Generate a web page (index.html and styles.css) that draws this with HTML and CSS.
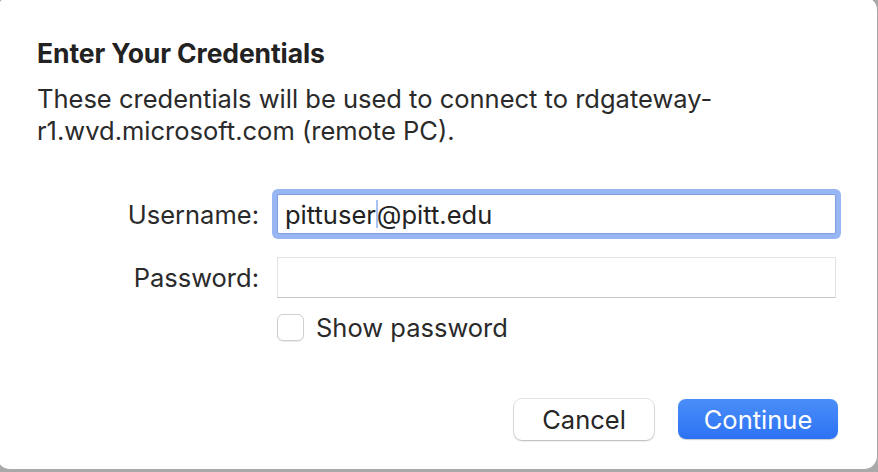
FILE: index.html
```html
<!DOCTYPE html>
<html>
<head>
<meta charset="utf-8">
<link rel="stylesheet" href="styles.css">
</head>
<body>
<div class="dialog">
  <h1 class="title">Enter Your Credentials</h1>
  <p class="desc">These credentials will be used to connect to rdgateway-<br>r1.wvd.microsoft.com (remote PC).</p>
  <div class="form">
    <label class="label">Username:</label>
    <div class="field focused"><span class="val">pittuser</span><span class="caret"></span><span class="val">@pitt.edu</span></div>
    <label class="label row-gap">Password:</label>
    <div class="field row-gap"></div>
    <div></div>
    <div class="check-row"><span class="checkbox"></span><span class="check-label">Show password</span></div>
  </div>
  <div class="buttons">
    <button class="btn cancel">Cancel</button>
    <button class="btn primary">Continue</button>
  </div>
</div>
</body>
</html>
```
FILE: styles.css
```css
html, body {
  margin: 0;
  padding: 0;
}
body {
  width: 878px;
  height: 472px;
  overflow: hidden;
  background: #a9a9a9;
  font-family: Inter, "Noto Sans", sans-serif;
  color: #262626;
}
.dialog {
  box-sizing: border-box;
  width: 880px;
  height: 472px;
  margin: -3px 0 0 -3px;
  background: #ffffff;
  border-radius: 13px;
  padding: 41px 0 0 40px;
  display: flex;
  flex-direction: column;
}
.title {
  margin: 0;
  font-size: 26.5px;
  font-weight: 700;
  line-height: 30px;
  letter-spacing: -0.1px;
  color: #222;
}
.desc {
  margin: 15px 0 0 0;
  font-size: 25.5px;
  line-height: 32px;
  color: #2a2a2a;
}
.form {
  margin-top: 47px;
  display: grid;
  grid-template-columns: 222px 559px;
  column-gap: 18px;
  row-gap: 0;
  align-items: center;
}
.label {
  justify-self: end;
  font-size: 25.5px;
  line-height: 31px;
  color: #2a2a2a;
}
.row-gap {
  margin-top: 23px;
}
.field {
  box-sizing: border-box;
  height: 41px;
  border: 1px solid #e2e2e2;
  border-bottom-color: #c6c6c6;
  background: #fff;
  display: flex;
  align-items: center;
  padding-left: 7px;
  font-size: 25.5px;
  color: #222;
}
.field.focused {
  height: 40px;
  border-color: #7f9fe0;
  box-shadow: 0 0 0 5px #98b5f4;
  border-radius: 2px;
}
.caret {
  display: inline-block;
  width: 2px;
  height: 28px;
  background: #a9c1f5;
  margin: 0 -1px 0 0;
}
.check-row {
  margin-top: 16px;
  height: 27px;
  display: flex;
  align-items: center;
  gap: 12px;
}
.checkbox {
  box-sizing: border-box;
  width: 27px;
  height: 27px;
  border: 1px solid #cfcfcf;
  border-radius: 6px;
  background: #fff;
  box-shadow: 0 1px 1px rgba(0,0,0,0.08);
}
.check-label {
  font-size: 25.5px;
  line-height: 27px;
  color: #2a2a2a;
}
.buttons {
  margin-top: 58px;
  display: flex;
  justify-content: flex-end;
  gap: 24px;
  padding-right: 39px;
}
.btn {
  font-family: Inter, "Noto Sans", sans-serif;
  font-size: 25.5px;
  height: 41px;
  border-radius: 8px;
  border: none;
  padding: 0;
}
.cancel {
  width: 140px;
  background: #fff;
  color: #262626;
  box-shadow: 0 0 0 1px rgba(0,0,0,0.1), 0 1px 2px rgba(0,0,0,0.2);
}
.primary {
  width: 160px;
  height: 40px;
  color: #fff;
  background: linear-gradient(#4a8ef9, #2d72f4);
  box-shadow: 0 0.5px 1px rgba(0,0,0,0.2);
}
```
